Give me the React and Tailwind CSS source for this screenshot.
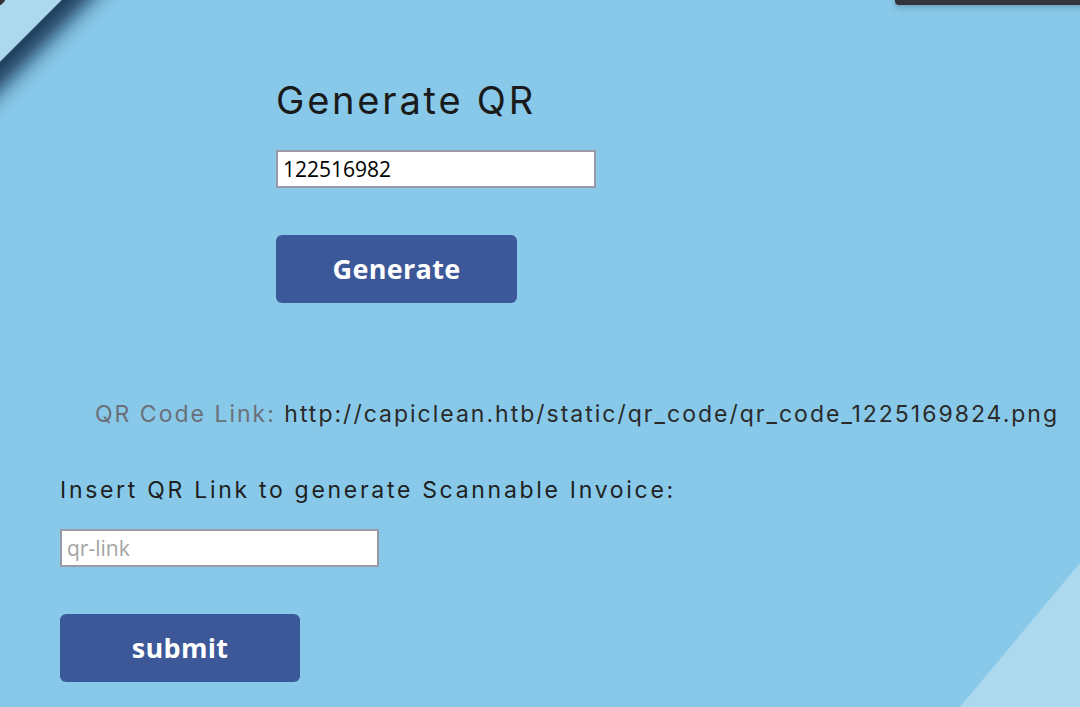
import React from 'react';

const poppins = { fontFamily: 'Inter, "Noto Sans", sans-serif' };
const sans = { fontFamily: '"Open Sans", sans-serif' };

export default function App() {
  return (
    <div className="relative w-[1080px] h-[707px] overflow-hidden bg-[#88c9e9]">
      {/* background decorations */}
      <div className="absolute left-[-174px] top-[-174px] w-[240px] h-[240px] bg-[#add9ee] rotate-45 shadow-[14px_14px_20px_6px_#1f3f5e]" />
      <div className="absolute left-[-4px] top-[-4px] w-[10px] h-[10px] bg-[#333] rounded-br-full" />
      <div className="absolute right-[-20px] top-[-10px] w-[205px] h-[15px] bg-[#32323c] rounded-bl-[4px] shadow-[0_2px_6px_rgba(0,0,0,0.25)]" />
      <div className="absolute left-[1080px] top-[563px] w-[400px] h-[400px] bg-[#acd9ed] origin-top-left rotate-[39.8deg]" />

      <div className="relative flex flex-col">
        <div className="flex flex-col items-start pl-[276px] pt-[77px]">
          <h1 className="text-[38px] leading-[46px] tracking-[2.8px] text-[#1a1a1a] font-normal" style={poppins}>Generate QR</h1>
          <input
            defaultValue="122516982"
            className="mt-[27px] w-[320px] h-[38px] bg-white border-2 border-[#9a9aa6] px-[5px] text-[21px] text-black outline-none"
            style={sans}
          />
          <button
            className="mt-[47px] w-[241px] h-[68px] rounded-[6px] bg-[#3c5898] text-white text-[27px] tracking-[0.3px] font-bold"
            style={sans}
          >
            Generate
          </button>
        </div>

        <p className="mt-[96px] pl-[95px] text-[23px] leading-[30px] tracking-[2px] whitespace-nowrap" style={poppins}>
          <span className="text-[#6b6f78]">QR Code Link: </span>
          <span className="text-[#2a2a2a]">http://capiclean.htb/static/qr_code/qr_code_1225169824.png</span>
        </p>

        <div className="flex flex-col items-start pl-[60px] pt-[46px]">
          <p className="text-[23px] leading-[30px] tracking-[2.7px] text-[#1f1f1f] whitespace-nowrap" style={poppins}>
            Insert QR Link to generate Scannable Invoice:
          </p>
          <input
            placeholder="qr-link"
            className="mt-[24px] w-[319px] h-[38px] bg-white border-2 border-[#9a9aa6] px-[5px] text-[21px] text-black placeholder:text-[#a3a3a3] outline-none"
            style={sans}
          />
          <button
            className="mt-[47px] w-[240px] h-[68px] rounded-[6px] bg-[#3c5898] text-white text-[27px] tracking-[0.3px] font-bold"
            style={sans}
          >
            submit
          </button>
        </div>
      </div>
    </div>
  );
}
